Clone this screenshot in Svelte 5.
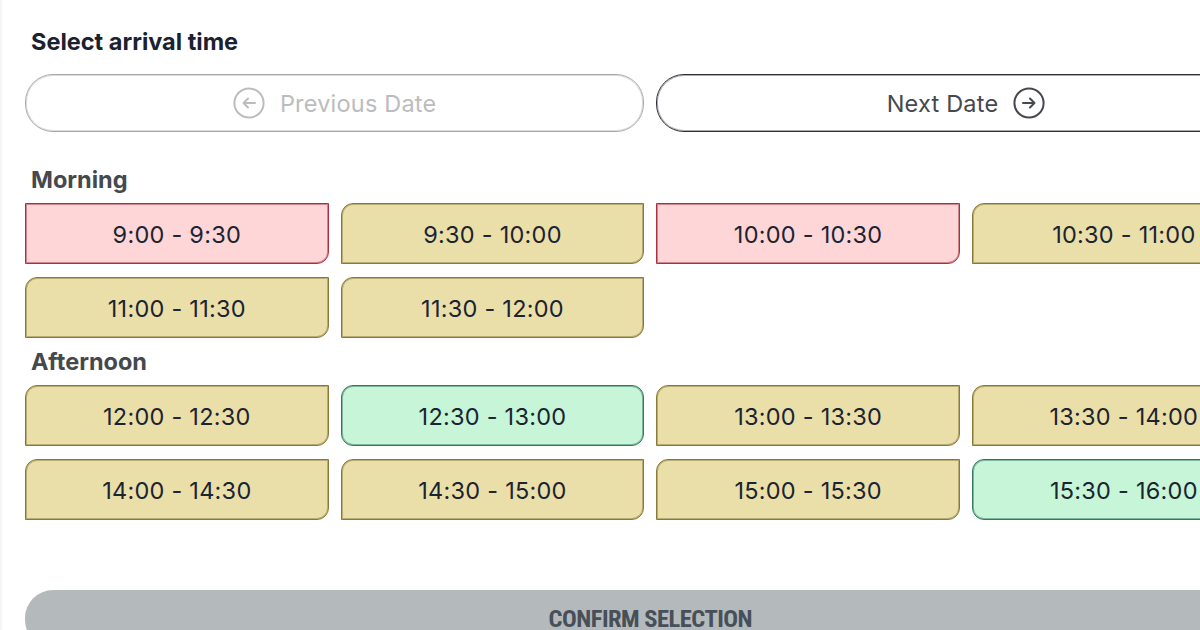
<script>
  const morning = [
    { label: "9:00 - 9:30", status: "busy" },
    { label: "9:30 - 10:00", status: "few" },
    { label: "10:00 - 10:30", status: "busy" },
    { label: "10:30 - 11:00", status: "few" },
    { label: "11:00 - 11:30", status: "few" },
    { label: "11:30 - 12:00", status: "few" }
  ]

  const afternoon = [
    { label: "12:00 - 12:30", status: "few" },
    { label: "12:30 - 13:00", status: "free" },
    { label: "13:00 - 13:30", status: "few" },
    { label: "13:30 - 14:00", status: "few" },
    { label: "14:00 - 14:30", status: "few" },
    { label: "14:30 - 15:00", status: "few" },
    { label: "15:00 - 15:30", status: "few" },
    { label: "15:30 - 16:00", status: "free" }
  ]

  const groups = [
    { title: "Morning", slots: morning },
    { title: "Afternoon", slots: afternoon }
  ]
</script>

<main class="page">
  <h1>Select arrival time</h1>

  <div class="nav">
    <button class="nav-btn disabled">
      <svg viewBox="0 0 32 32" width="32" height="32" fill="none" stroke="currentColor" stroke-width="2" stroke-linecap="round" stroke-linejoin="round">
        <circle cx="16" cy="16" r="14.6" />
        <path d="M22 16H10.5M15 11.5L10.5 16L15 20.5" />
      </svg>
      <span>Previous Date</span>
    </button>
    <button class="nav-btn">
      <span>Next Date</span>
      <svg viewBox="0 0 32 32" width="32" height="32" fill="none" stroke="currentColor" stroke-width="2" stroke-linecap="round" stroke-linejoin="round">
        <circle cx="16" cy="16" r="14.6" />
        <path d="M10 16H21.5M17 11.5L21.5 16L17 20.5" />
      </svg>
    </button>
  </div>

  {#each groups as group}
    <section class="group">
      <h2>{group.title}</h2>
      <div class="slots">
        {#each group.slots as slot}
          <button class="slot {slot.status}">{slot.label}</button>
        {/each}
      </div>
    </section>
  {/each}

  <button class="confirm"><span>CONFIRM SELECTION</span></button>
</main>

<style>
  :global(body) {
    margin: 0;
    background: #fff;
    overflow: hidden;
  }

  .page {
    box-sizing: border-box;
    width: 1275.67px;
    height: 630px;
    padding: 28px 0 0 25px;
    font-family: Inter, "Liberation Sans", sans-serif;
    overflow: hidden;
    box-shadow: inset 3px 0 2px -1px #f4f4f5;
  }

  button {
    font-family: inherit;
    cursor: pointer;
    padding: 0;
  }

  h1 {
    margin: 0 0 0 6px;
    font-size: 23.5px;
    line-height: 28px;
    font-weight: 700;
    color: #1a2230;
  }

  .nav {
    display: grid;
    grid-template-columns: 1fr 1fr;
    gap: 12px;
    margin-top: 18px;
  }

  .nav-btn {
    display: flex;
    align-items: center;
    justify-content: center;
    gap: 15px;
    height: 58px;
    background: #fff;
    border: 1px solid #2c3036;
    box-shadow: inset 0 0 0 1px rgba(44, 48, 54, 0.4);
    border-radius: 28px;
    font-size: 23.5px;
    letter-spacing: 0.2px;
    color: #45484d;
  }

  .nav-btn.disabled {
    border-color: #a8a8a8;
    box-shadow: inset 0 0 0 1px rgba(168, 168, 168, 0.4);
    color: #bcbcbc;
  }

  .group h2 {
    margin: 0 0 0 6px;
    font-size: 23.5px;
    line-height: 28px;
    font-weight: 700;
    color: #45484d;
  }

  .group:nth-of-type(1) {
    margin-top: 34px;
  }

  .group:nth-of-type(2) {
    margin-top: 10px;
  }

  .slots {
    display: grid;
    grid-template-columns: repeat(4, 1fr);
    gap: 12.5px 12px;
    margin-top: 9.3px;
  }

  .slot {
    height: 61px;
    padding-top: 2px;
    border: 1px solid;
    font-size: 23.5px;
    letter-spacing: 0.25px;
    color: #1b2431;
  }

  .few {
    background: #ebdfa9;
    border-color: #857a38;
    box-shadow: inset 0 0 0 1px rgba(133, 122, 56, 0.5);
    border-radius: 12px 0 12px 0;
  }

  .busy {
    background: #ffd6d8;
    border-color: #a8303f;
    box-shadow: inset 0 0 0 1px rgba(168, 48, 63, 0.5);
    border-radius: 0 0 12px 0;
  }

  .free {
    background: #c6f5d8;
    border-color: #35775f;
    box-shadow: inset 0 0 0 1px rgba(53, 119, 95, 0.5);
    border-radius: 12px;
  }

  .confirm {
    display: block;
    width: 100%;
    height: 58px;
    margin-top: 70px;
    background: #b4b9bc;
    border: 0;
    border-radius: 28px;
    font-family: Roboto, sans-serif;
    font-size: 24.5px;
    font-stretch: 75%;
    font-weight: 700;
    letter-spacing: -0.5px;
    color: #474f59;
  }
</style>
